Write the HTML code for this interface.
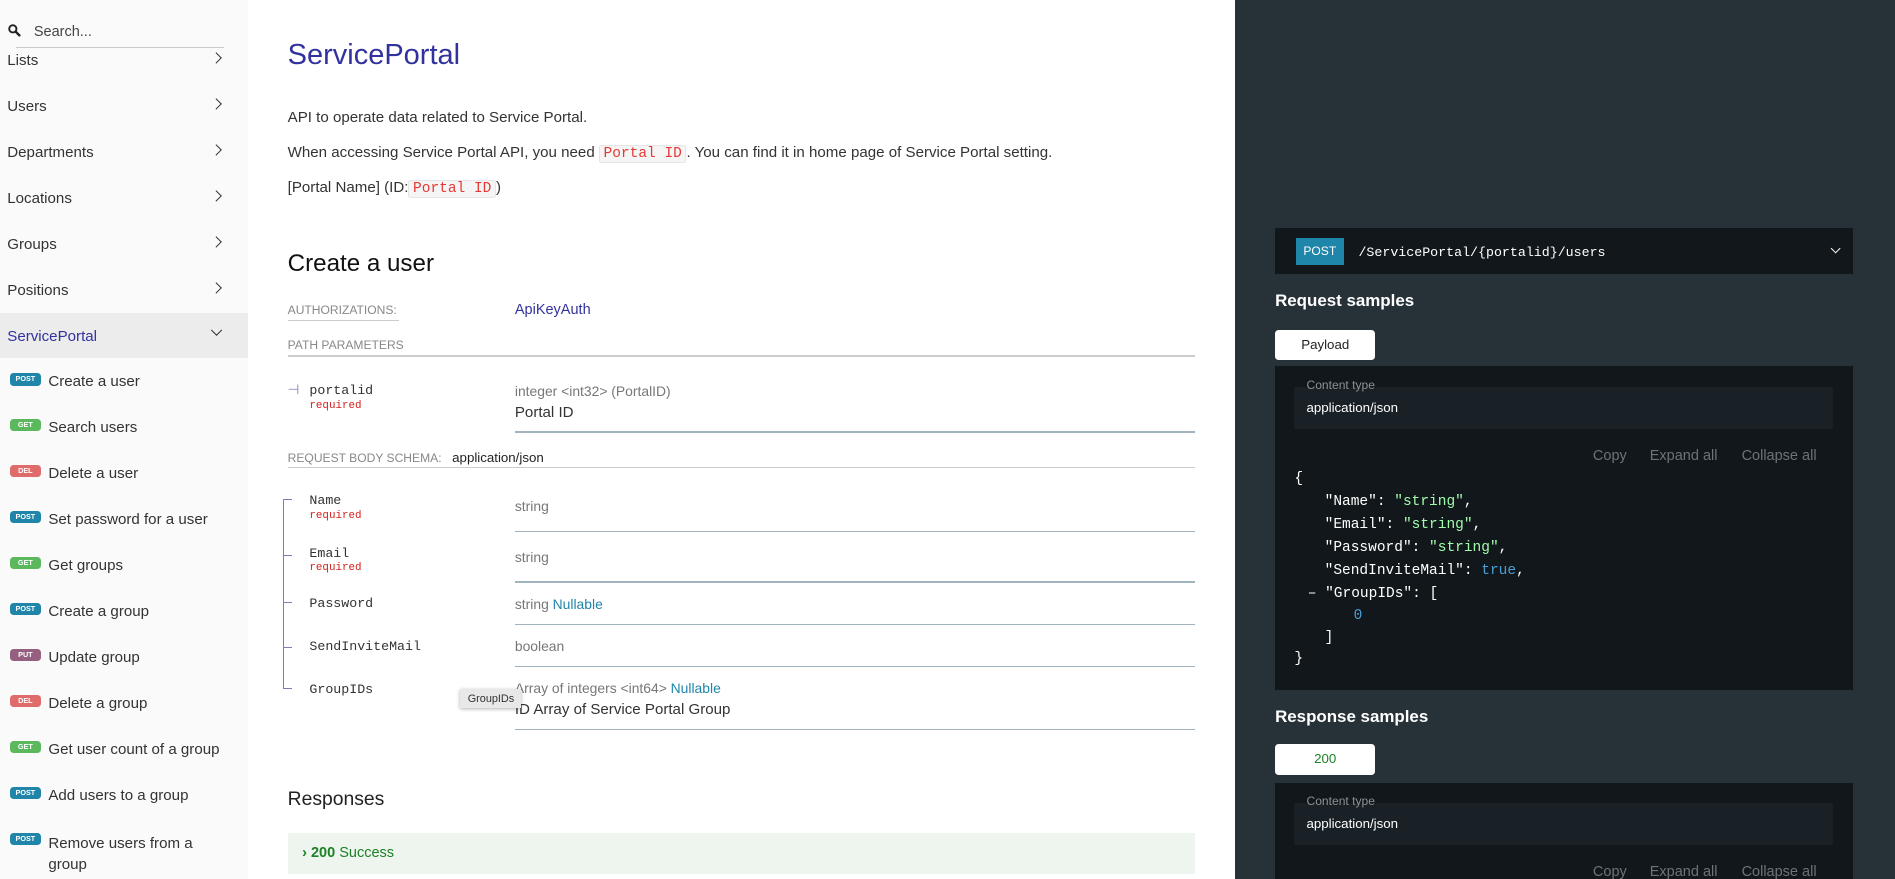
<!DOCTYPE html>
<html><head><meta charset="utf-8"><style>
*{margin:0;padding:0;box-sizing:border-box}
html,body{width:1895px;height:879px;overflow:hidden;background:#fff}
#w{zoom:1.2086;width:1568px;height:727px;position:relative;font-family:"Liberation Sans",sans-serif;color:#333}
.a{position:absolute;white-space:nowrap}
#sb{position:absolute;left:0;top:0;width:205px;height:727px;background:#fafafa}
.si{position:absolute;left:6px;font-size:12.5px;color:#333;margin-top:1px}
.chev{position:absolute;left:175px;width:7px;height:7px;border-right:1.6px solid #333;border-top:1.6px solid #333;transform:rotate(45deg)}
.b{position:absolute;left:8px;width:26px;height:10px;border-radius:3px;color:#fff;font-size:6px;font-weight:bold;text-align:center;line-height:10px}
.post{background:#1f85a9}.get{background:#5cb85c}.del{background:#e06b6b}.put{background:#95607f}
.mono{font-family:"Liberation Mono",monospace}
.code{font-family:"Liberation Mono",monospace;background:#f5f5f5;border:1px solid #e6e6e6;color:#e53935;font-size:12px;padding:0 3px;border-radius:2px}
.ln{position:absolute;height:1px;background:#9fb4be}
.lab{font-size:10px;color:#888}
.fn{font-family:"Liberation Mono",monospace;font-size:11px;color:#333}
.req{font-family:"Liberation Mono",monospace;font-size:9px;color:#d41f1c}
.ty{font-size:11.5px;color:#777}
#rp{position:absolute;left:1022px;top:0;width:546px;height:727px;background:#263238}
.dk{position:absolute;background:#11171a}
.wt{color:#fff}
.js{font-family:"Liberation Mono",monospace;font-size:12px;color:#fff;position:absolute;left:1071px}
.str{color:#a0fbaa}.bl{color:#4a9fd6}
</style></head><body><div id="w">
<div id="sb">
 <svg style="position:absolute;left:7px;top:20px" width="11" height="11" viewBox="0 0 11 11"><circle cx="4" cy="4" r="3" fill="none" stroke="#222" stroke-width="1.6"/><line x1="6" y1="6" x2="10" y2="10" stroke="#222" stroke-width="2"/></svg>
 <div class="a" style="left:28px;top:20px;font-size:12px;color:#444">Search...</div>
 <div style="position:absolute;left:13px;top:39px;width:172px;height:1px;background:#ccc"></div>
 <div class="si" style="top:42px">Lists</div><div class="chev" style="top:45px"></div>
 <div class="si" style="top:80px">Users</div><div class="chev" style="top:83px"></div>
 <div class="si" style="top:118px">Departments</div><div class="chev" style="top:121px"></div>
 <div class="si" style="top:156px">Locations</div><div class="chev" style="top:159px"></div>
 <div class="si" style="top:194px">Groups</div><div class="chev" style="top:197px"></div>
 <div class="si" style="top:232px">Positions</div><div class="chev" style="top:235px"></div>
 <div style="position:absolute;left:0;top:259px;width:205px;height:37px;background:#ececec"></div>
 <div class="si" style="top:270px;color:#32329f">ServicePortal</div><div class="chev" style="top:270px;transform:rotate(135deg)"></div>
 <div class="b post" style="top:309px">POST</div><div class="si" style="left:40px;top:308px">Create a user</div>
 <div class="b get" style="top:347px">GET</div><div class="si" style="left:40px;top:346px">Search users</div>
 <div class="b del" style="top:385px">DEL</div><div class="si" style="left:40px;top:384px">Delete a user</div>
 <div class="b post" style="top:423px">POST</div><div class="si" style="left:40px;top:422px">Set password for a user</div>
 <div class="b get" style="top:461px">GET</div><div class="si" style="left:40px;top:460px">Get groups</div>
 <div class="b post" style="top:499px">POST</div><div class="si" style="left:40px;top:498px">Create a group</div>
 <div class="b put" style="top:537px">PUT</div><div class="si" style="left:40px;top:536px">Update group</div>
 <div class="b del" style="top:575px">DEL</div><div class="si" style="left:40px;top:574px">Delete a group</div>
 <div class="b get" style="top:613px">GET</div><div class="si" style="left:40px;top:612px">Get user count of a group</div>
 <div class="b post" style="top:651px">POST</div><div class="si" style="left:40px;top:650px">Add users to a group</div>
 <div class="b post" style="top:689px">POST</div><div class="si" style="left:40px;top:688px;line-height:18px">Remove users from a<br>group</div>
</div>

<div class="a" style="left:238px;top:32px;font-size:24px;color:#32329f">ServicePortal</div>
<div class="a" style="left:238px;top:90px;font-size:12.5px">API to operate data related to Service Portal.</div>
<div class="a" style="left:238px;top:119px;font-size:12.5px">When accessing Service Portal API, you need <span class="code">Portal ID</span>. You can find it in home page of Service Portal setting.</div>
<div class="a" style="left:238px;top:148px;font-size:12.5px">[Portal Name] (ID:<span class="code">Portal ID</span>)</div>
<div class="a" style="left:238px;top:207px;font-size:20px;color:#111">Create a user</div>
<div class="a lab" style="left:238px;top:251px">AUTHORIZATIONS:</div>
<div style="position:absolute;left:238px;top:265px;width:92px;height:1px;background:#ccc"></div>
<div class="a" style="left:426px;top:250px;font-size:12px;color:#32329f">ApiKeyAuth</div>
<div class="a lab" style="left:238px;top:280px">PATH PARAMETERS</div>
<div style="position:absolute;left:238px;top:294px;width:751px;height:1px;background:#ccc"></div>
<div class="a" style="left:238px;top:316px;color:#7c7cbb;font-size:11px">&#8867;</div>
<div class="a fn" style="left:256px;top:317px">portalid</div>
<div class="a req" style="left:256px;top:331px">required</div>
<div class="a ty" style="left:426px;top:317px">integer &lt;int32&gt; (PortalID)</div>
<div class="a" style="left:426px;top:334px;font-size:12.5px">Portal ID</div>
<div class="ln" style="left:426px;top:357px;width:563px"></div>
<div class="a lab" style="left:238px;top:372px">REQUEST BODY SCHEMA: <span style="color:#222;font-size:11px;margin-left:6px">application/json</span></div>
<div style="position:absolute;left:238px;top:386px;width:751px;height:1px;background:#ccc"></div>
<div style="position:absolute;left:234px;top:413px;width:1px;height:157px;background:#7c7cbb"></div>
<div style="position:absolute;left:234px;top:413px;width:8px;height:1px;background:#7c7cbb"></div>
<div style="position:absolute;left:234px;top:459px;width:8px;height:1px;background:#7c7cbb"></div>
<div style="position:absolute;left:234px;top:498px;width:8px;height:1px;background:#7c7cbb"></div>
<div style="position:absolute;left:234px;top:535px;width:8px;height:1px;background:#7c7cbb"></div>
<div style="position:absolute;left:234px;top:569px;width:8px;height:1px;background:#7c7cbb"></div>
<div class="a fn" style="left:256px;top:408px">Name</div><div class="a req" style="left:256px;top:422px">required</div>
<div class="a ty" style="left:426px;top:412px">string</div><div class="ln" style="left:426px;top:439px;width:563px"></div>
<div class="a fn" style="left:256px;top:452px">Email</div><div class="a req" style="left:256px;top:465px">required</div>
<div class="a ty" style="left:426px;top:454px">string</div><div class="ln" style="left:426px;top:481px;width:563px"></div>
<div class="a fn" style="left:256px;top:493px">Password</div>
<div class="a ty" style="left:426px;top:493px">string <span style="color:#1f85a9">Nullable</span></div><div class="ln" style="left:426px;top:516px;width:563px"></div>
<div class="a fn" style="left:256px;top:529px">SendInviteMail</div>
<div class="a ty" style="left:426px;top:528px">boolean</div><div class="ln" style="left:426px;top:551px;width:563px"></div>
<div class="a fn" style="left:256px;top:564px">GroupIDs</div>
<div class="a ty" style="left:426px;top:563px">Array of integers &lt;int64&gt; <span style="color:#1f85a9">Nullable</span></div>
<div class="a" style="left:426px;top:580px;font-size:12.5px">ID Array of Service Portal Group</div>
<div class="a" style="left:381px;top:570px;background:#e8e8e8;font-size:9px;padding:3px 6px;box-shadow:0 1px 3px rgba(0,0,0,.3);color:#333">GroupIDs</div>
<div class="ln" style="left:426px;top:603px;width:563px"></div>
<div class="a" style="left:238px;top:653px;font-size:16px;color:#222">Responses</div>
<div style="position:absolute;left:238px;top:689px;width:751px;height:34px;background:#eef4ee"></div>
<div class="a" style="left:250px;top:699px;font-size:12px;color:#1d8127"><b>&#8250; 200</b> Success</div>

<div id="rp"></div>
<div class="dk" style="left:1055px;top:189px;width:478px;height:38px"></div>
<div class="a" style="left:1072px;top:197px;width:40px;height:22px;background:#1f85a9;color:#fff;font-size:10px;line-height:22px;text-align:center">POST</div>
<div class="a mono" style="left:1124px;top:203px;font-size:11px;color:#fff">/ServicePortal/{portalid}/users</div>
<div style="position:absolute;left:1516px;top:203px;width:6px;height:6px;border-right:1.6px solid #fff;border-bottom:1.6px solid #fff;transform:rotate(45deg)"></div>
<div class="a wt" style="left:1055px;top:241px;font-size:14px;font-weight:bold">Request samples</div>
<div class="a" style="left:1055px;top:273px;width:83px;height:25px;background:#fff;border-radius:3px;font-size:11px;text-align:center;line-height:25px;color:#222">Payload</div>
<div class="dk" style="left:1055px;top:303px;width:478px;height:268px"></div>
<div class="a" style="left:1071px;top:320px;width:446px;height:35px;background:#1a2126"></div>
<div class="a" style="left:1081px;top:313px;font-size:10px;color:#8a9297">Content type</div>
<div class="a wt" style="left:1081px;top:331px;font-size:11px">application/json</div>
<div class="a" style="left:1318px;top:371px;font-size:12px;color:#6c7479">Copy</div>
<div class="a" style="left:1365px;top:371px;font-size:12px;color:#6c7479">Expand all</div>
<div class="a" style="left:1441px;top:371px;font-size:12px;color:#6c7479">Collapse all</div>
<div class="js" style="top:390px">{</div>
<div class="js" style="top:409px;left:1096px">"Name": <span class="str">"string"</span>,</div>
<div class="js" style="top:428px;left:1096px">"Email": <span class="str">"string"</span>,</div>
<div class="js" style="top:447px;left:1096px">"Password": <span class="str">"string"</span>,</div>
<div class="js" style="top:466px;left:1096px">"SendInviteMail": <span class="bl">true</span>,</div>
<div class="js" style="top:485px;left:1082px">– "GroupIDs": [</div>
<div class="js" style="top:503px;left:1120px"><span class="bl">0</span></div>
<div class="js" style="top:521px;left:1096px">]</div>
<div class="js" style="top:539px">}</div>
<div class="a wt" style="left:1055px;top:585px;font-size:14px;font-weight:bold">Response samples</div>
<div class="a" style="left:1055px;top:616px;width:83px;height:25px;background:#fff;border-radius:3px;font-size:11px;text-align:center;line-height:25px;color:#1d8127">200</div>
<div class="dk" style="left:1055px;top:648px;width:478px;height:79px"></div>
<div class="a" style="left:1071px;top:664px;width:446px;height:35px;background:#1a2126"></div>
<div class="a" style="left:1081px;top:657px;font-size:10px;color:#8a9297">Content type</div>
<div class="a wt" style="left:1081px;top:675px;font-size:11px">application/json</div>
<div class="a" style="left:1318px;top:715px;font-size:12px;color:#6c7479">Copy</div>
<div class="a" style="left:1365px;top:715px;font-size:12px;color:#6c7479">Expand all</div>
<div class="a" style="left:1441px;top:715px;font-size:12px;color:#6c7479">Collapse all</div>
</div></body></html>
